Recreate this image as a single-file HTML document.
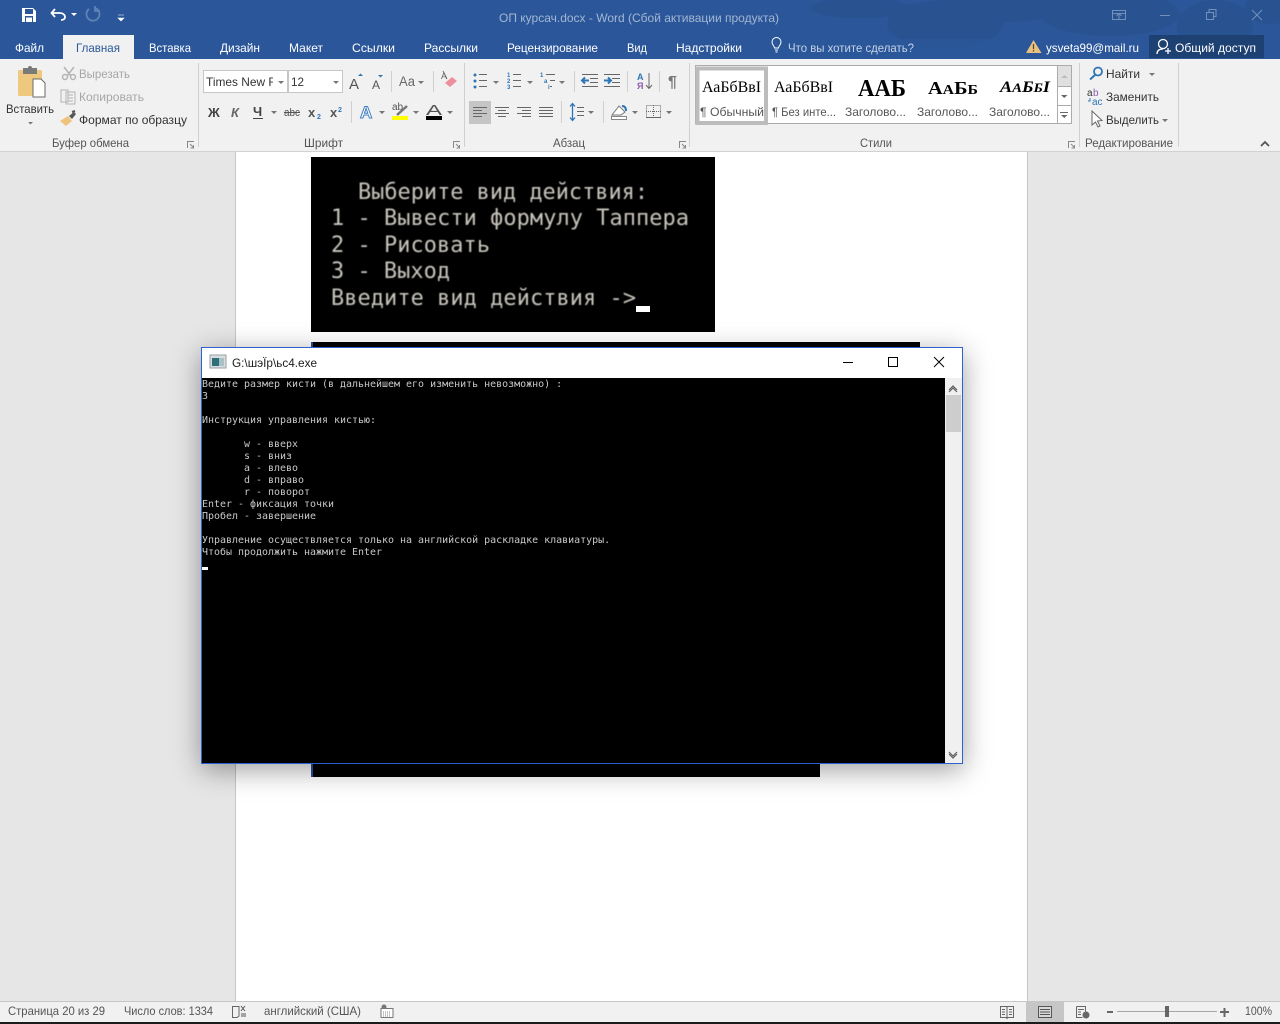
<!DOCTYPE html>
<html lang="ru"><head><meta charset="utf-8"><title>Word</title>
<style>
html,body{margin:0;padding:0;width:1280px;height:1024px;overflow:hidden;background:#e6e6e6}
svg{position:absolute;left:0;top:0;display:block}
text{font-family:"Liberation Sans","DejaVu Sans",sans-serif;font-size:12px;fill:#444;white-space:pre}
.t{fill:#fff}.g{fill:#a6a6a6}.l{fill:#555}
.m{font-family:"DejaVu Sans Mono","Liberation Mono",monospace;font-size:21.9px;fill:#c8c4bc}
.c{font-family:"DejaVu Sans Mono","Liberation Mono",monospace;font-size:9.97px;fill:#c8c8c8}
.s{font-family:"Liberation Serif",serif;fill:#000}
#win{position:absolute;left:201px;top:347px;width:760px;height:415px;border:1px solid #2a62cf;background:#fff;box-shadow:0 6px 26px rgba(0,0,0,.38)}
</style></head><body>
<svg width="1280" height="1024" viewBox="0 0 1280 1024">
<defs><filter id="b" x="-5%" y="-20%" width="110%" height="140%"><feGaussianBlur stdDeviation="0.4"/></filter></defs>
<!-- doc area -->
<rect y="152" width="1280" height="850" fill="#e6e6e6"/>
<rect x="235" y="152" width="1" height="850" fill="#c6c6c6"/><rect x="1027" y="152" width="1" height="850" fill="#c6c6c6"/>
<rect x="236" y="152" width="791" height="850" fill="#fff"/>
<rect x="311" y="157" width="404" height="175" fill="#000"/>
<g filter="url(#b)">
<text class="m" x="358" y="199" textLength="290">Выберите вид действия:</text>
<text class="m" x="331" y="225" textLength="358">1 - Вывести формулу Таппера</text>
<text class="m" x="331" y="252" textLength="159">2 - Рисовать</text>
<text class="m" x="331" y="278" textLength="119">3 - Выход</text>
<text class="m" x="331" y="305" textLength="305">Введите вид действия -&gt;</text>
</g>
<rect x="636" y="306" width="14" height="6" fill="#fff"/>
<rect x="311" y="342" width="609" height="6" fill="#000"/><rect x="311" y="342" width="2" height="6" fill="#2a4fa0"/>
<rect x="312" y="760" width="508" height="17" fill="#000"/><rect x="311" y="760" width="2" height="17" fill="#2a4fa0"/>
</svg>

<div id="win"></div>

<svg width="1280" height="1024" viewBox="0 0 1280 1024">
<!-- Console -->
<rect x="202" y="378" width="743" height="385" fill="#000"/>
<rect x="945" y="378" width="17" height="385" fill="#f0f0f0"/>
<rect x="946" y="395" width="15" height="37" fill="#cdcdcd"/>
<path d="M949 390l4-4 4 4M949 392l4-4 4 4" fill="none" stroke="#606060" stroke-width="1.2"/>
<path d="M949 752l4 4 4-4M949 754l4 4 4-4" fill="none" stroke="#606060" stroke-width="1.2"/>
<rect x="210" y="355" width="16" height="13" fill="#d8dde0" stroke="#9aa0a4"/><rect x="212" y="358" width="7" height="8" fill="#2f6f78"/><rect x="219" y="358" width="5" height="8" fill="#a9c1c6"/>
<text x="232" y="367" textLength="85" lengthAdjust="spacingAndGlyphs" style="fill:#1c1c1c">G:\шэЇр\ьс4.exe</text>
<rect x="843" y="362" width="10" height="1" fill="#000"/>
<rect x="888.5" y="357.5" width="9" height="9" fill="none" stroke="#000"/>
<path d="M934 357l10 10M944 357l-10 10" stroke="#000" stroke-width="1"/>
<text class="c" x="202" y="387">Ведите размер кисти (в дальнейшем его изменить невозможно) :</text>
<text class="c" x="202" y="399">3</text>
<text class="c" x="202" y="423">Инструкция управления кистью:</text>
<text class="c" x="244" y="447">w - вверх</text>
<text class="c" x="244" y="459">s - вниз</text>
<text class="c" x="244" y="471">a - влево</text>
<text class="c" x="244" y="483">d - вправо</text>
<text class="c" x="244" y="495">r - поворот</text>
<text class="c" x="202" y="507">Enter - фиксация точки</text>
<text class="c" x="202" y="519">Пробел - завершение</text>
<text class="c" x="202" y="543">Управление осуществляется только на английской раскладке клавиатуры.</text>
<text class="c" x="202" y="555">Чтобы продолжить нажмите Enter</text>
<rect x="202" y="567" width="6" height="3" fill="#fff"/>

<!-- Title bar -->
<rect width="1280" height="59" fill="#2b579a"/>
<g fill="#285290"><ellipse cx="945" cy="24" rx="58" ry="24"/><ellipse cx="1000" cy="8" rx="70" ry="14"/><ellipse cx="1110" cy="14" rx="70" ry="22"/><ellipse cx="1215" cy="26" rx="38" ry="26"/><ellipse cx="860" cy="8" rx="50" ry="10"/><ellipse cx="1270" cy="8" rx="25" ry="16"/></g>
<rect x="770" y="39" width="258" height="18" fill="#2b579a" opacity=".8"/>
<path d="M22 8h11l3 3v11H22z" fill="#fff"/><rect x="25" y="9" width="8" height="5" fill="#2b579a"/><rect x="25" y="16" width="8" height="6" fill="#2b579a"/><rect x="26" y="17.500" width="6" height="4.500" fill="#fff"/>
<path d="M55 9l-3.500 4 3.500 4M52 13h8c3 0 5 2 5 4s-2 3-4 3" fill="none" stroke="#fff" stroke-width="1.800"/>
<path d="M71 13h6l-3 3z" fill="#fff"/>
<path d="M89 9a6.500 6.500 0 1 0 6-1M95 6v5h5" fill="none" stroke="#5f83b7" stroke-width="1.800"/>
<path d="M118 15h6M118 18h6l-3 3z" fill="#fff" stroke="#fff" stroke-width=".6"/>
<text x="499" y="22" textLength="280" lengthAdjust="spacingAndGlyphs" style="fill:#a3b6d3">ОП курсач.docx - Word (Сбой активации продукта)</text>
<g fill="none" stroke="#7390bb"><rect x="1112.500" y="10.500" width="13" height="9"/><path d="M1112 13.500h14M1119 19v-5M1116.500 16l2.500-2.500 2.500 2.500"/><path d="M1160 15.500h10"/><rect x="1206.500" y="12.500" width="7" height="7"/><path d="M1209 12v-2.500h7v7h-2.500"/><path d="M1252 10l10 10M1262 10l-10 10"/></g>
<!-- Tabs -->
<rect x="63" y="35" width="71" height="24" fill="#f1f1f1"/>
<text class="t" x="15" y="52" textLength="29" lengthAdjust="spacingAndGlyphs">Файл</text>
<text x="76" y="52" textLength="44" lengthAdjust="spacingAndGlyphs" style="fill:#2b579a">Главная</text>
<text class="t" x="149" y="52" textLength="42" lengthAdjust="spacingAndGlyphs">Вставка</text>
<text class="t" x="220" y="52" textLength="40" lengthAdjust="spacingAndGlyphs">Дизайн</text>
<text class="t" x="289" y="52" textLength="34" lengthAdjust="spacingAndGlyphs">Макет</text>
<text class="t" x="352" y="52" textLength="43" lengthAdjust="spacingAndGlyphs">Ссылки</text>
<text class="t" x="424" y="52" textLength="54" lengthAdjust="spacingAndGlyphs">Рассылки</text>
<text class="t" x="507" y="52" textLength="91" lengthAdjust="spacingAndGlyphs">Рецензирование</text>
<text class="t" x="627" y="52" textLength="20" lengthAdjust="spacingAndGlyphs">Вид</text>
<text class="t" x="676" y="52" textLength="66" lengthAdjust="spacingAndGlyphs">Надстройки</text>
<path d="M774.500 48c0-2-2.500-3-2.500-6a4.500 4.500 0 0 1 9 0c0 3-2.500 4-2.500 6zM775 50h3M775.500 52h2" fill="none" stroke="#fff"/>
<text x="788" y="52" textLength="126" lengthAdjust="spacingAndGlyphs" style="fill:#c6d3e6">Что вы хотите сделать?</text>
<path d="M1033.500 40l8 13h-15.500z" fill="#e9c181"/><path d="M1033.500 44v5M1033.500 50v1.500" stroke="#5c4a2a" stroke-width="1.300"/>
<text class="t" x="1046" y="52" textLength="93" lengthAdjust="spacingAndGlyphs">ysveta99@mail.ru</text>
<rect x="1149" y="35" width="115" height="23" fill="#1e4173"/>
<circle cx="1163" cy="44" r="4.500" fill="none" stroke="#fff" stroke-width="1.300"/><path d="M1157 54c0-4 3-5 6-5M1165 51h6M1168 48v6" fill="none" stroke="#fff" stroke-width="1.300"/>
<text class="t" x="1175" y="52" textLength="81" lengthAdjust="spacingAndGlyphs">Общий доступ</text>

<!-- Ribbon -->
<rect y="59" width="1280" height="92" fill="#f1f1f1"/>
<rect y="151" width="1280" height="1" fill="#d2d2d2"/>
<g fill="#d0d0d0"><rect x="198" y="63" width="1" height="84"/><rect x="464" y="63" width="1" height="84"/><rect x="689" y="63" width="1" height="84"/><rect x="1079" y="63" width="1" height="84"/><rect x="1178" y="63" width="1" height="84"/><rect x="391" y="71" width="1" height="21"/><rect x="433" y="71" width="1" height="21"/><rect x="351" y="101" width="1" height="22"/><rect x="574" y="71" width="1" height="21"/><rect x="627" y="71" width="1" height="21"/><rect x="659" y="71" width="1" height="21"/><rect x="561" y="101" width="1" height="22"/><rect x="603" y="101" width="1" height="22"/></g>

<!-- Clipboard -->
<rect x="18" y="70" width="24" height="26" rx="1.500" fill="#efc880"/>
<rect x="23" y="68" width="14" height="6" fill="#7a7a7a"/><circle cx="30" cy="68" r="2" fill="#7a7a7a"/>
<path d="M33 79h8l4 4v14H33z" fill="#fff" stroke="#6a6a6a"/>
<text x="6" y="113" textLength="48" lengthAdjust="spacingAndGlyphs" style="fill:#333">Вставить</text>
<path d="M28 122h5l-2.500 2.500z" fill="#777"/>
<g fill="none" stroke="#b4b4b4" stroke-width="1.500"><path d="M64 67l7 9M74 67l-7 9"/><circle cx="65" cy="77" r="2.500"/><circle cx="73" cy="77" r="2.500"/><path d="M61 90h7v12h-7zM66 92h9v12h-9z" stroke-width="1" fill="#f1f1f1"/><path d="M68 95h5M68 98h5M68 101h5" stroke-width="1"/></g>
<text class="g" x="79" y="78" textLength="51" lengthAdjust="spacingAndGlyphs">Вырезать</text>
<text class="g" x="79" y="101" textLength="65" lengthAdjust="spacingAndGlyphs">Копировать</text>
<path d="M60 121l8-5 4 5-6 5z" fill="#efc27e"/><path d="M69 116l5-4 2 2-4 5z" fill="#555"/><path d="M72 112l3-1" stroke="#555" stroke-width="2"/>
<text x="79" y="124" textLength="108" lengthAdjust="spacingAndGlyphs" style="fill:#333">Формат по образцу</text>
<text class="l" x="52" y="147" textLength="77" lengthAdjust="spacingAndGlyphs">Буфер обмена</text>
<g fill="none" stroke="#888"><path d="M187.500 148v-6.500h6.500M190 144l3.500 3.500M193.500 145v3h-3"/><path d="M453.500 148v-6.500h6.500M456 144l3.500 3.500M459.500 145v3h-3"/><path d="M679.500 148v-6.500h6.500M682 144l3.500 3.500M685.500 145v3h-3"/><path d="M1068.500 148v-6.500h6.500M1071 144l3.500 3.500M1074.500 145v3h-3"/></g>

<!-- Font -->
<rect x="203.500" y="70.500" width="84" height="22" fill="#fff" stroke="#c6c6c6"/>
<rect x="288.500" y="70.500" width="54" height="22" fill="#fff" stroke="#c6c6c6"/>
<text x="206" y="86" textLength="71" lengthAdjust="spacingAndGlyphs" style="fill:#333">Times New R</text>
<rect x="273" y="72" width="6" height="19" fill="#fff"/>
<text x="291" y="86" textLength="13" lengthAdjust="spacingAndGlyphs" style="fill:#333">12</text>
<g fill="#777"><path d="M278 81h6l-3 3zM333 81h6l-3 3zM418 81h6l-3 3zM271 111h6l-3 3zM379 111h6l-3 3zM413 111h6l-3 3zM447 111h6l-3 3zM493 81h6l-3 3zM527 81h6l-3 3zM559 81h6l-3 3zM588 111h6l-3 3zM632 111h6l-3 3zM666 111h6l-3 3z"/></g>
<text x="349" y="89" style="font-size:15px;fill:#555">А</text><path d="M358 76l2.500-2.500 2.500 2.500z" fill="#2f75b5"/>
<text x="372" y="89" style="font-size:12px;fill:#555">А</text><path d="M378 75h5l-2.500 2.500z" fill="#2f75b5"/>
<text x="399" y="86" style="font-size:14px;fill:#666" textLength="16" lengthAdjust="spacingAndGlyphs">Аа</text>
<path d="M443 71l4 8" stroke="#777" stroke-width="1"/><path d="M445 83l7-6 5 4-7 6z" fill="#ee8f9d"/><text x="441" y="79" style="font-size:9px;fill:#666">A</text>
<text x="208" y="117" style="font-size:13px;font-weight:bold;fill:#444">Ж</text>
<text x="231" y="117" style="font-size:13px;font-weight:bold;font-style:italic;fill:#666">К</text>
<text x="253" y="116" style="font-size:13px;font-weight:bold;fill:#444">Ч</text><rect x="253" y="118" width="10" height="1" fill="#444"/>
<text x="284" y="116" style="font-size:11px;fill:#555" textLength="16" lengthAdjust="spacingAndGlyphs">abc</text><rect x="284" y="112" width="16" height="1" fill="#555"/>
<text x="308" y="117" style="font-size:13px;font-weight:bold;fill:#555">x</text><text x="317" y="119" style="font-size:7px;font-weight:bold;fill:#2f75b5">2</text>
<text x="330" y="117" style="font-size:13px;font-weight:bold;fill:#555">x</text><text x="338" y="112" style="font-size:7px;font-weight:bold;fill:#2f75b5">2</text>
<text x="360" y="118" style="font-size:17px;font-weight:bold;fill:#fff;stroke:#3f7fc4;stroke-width:1">A</text>
<text x="392" y="110" style="font-size:10px;fill:#555">ab</text><path d="M397 115l10-9" stroke="#777" stroke-width="2.500"/><rect x="392" y="116" width="16" height="4" fill="#ff0"/>
<text x="426" y="115" style="font-size:15px;fill:#555" textLength="16" lengthAdjust="spacingAndGlyphs">A</text><rect x="426" y="116" width="16" height="4" fill="#000"/>
<text class="l" x="304" y="147" textLength="39" lengthAdjust="spacingAndGlyphs">Шрифт</text>

<!-- Paragraph -->
<g fill="#2f75b5"><circle cx="475" cy="75" r="1.500"/><circle cx="475" cy="81" r="1.500"/><circle cx="475" cy="87" r="1.500"/></g>
<path d="M479 74.500h8M479 80.500h8M479 86.500h8M513 74.500h8M513 80.500h8M513 86.500h8M546 74.500h9M550 80.500h5M550 86.500h2M582 74.500h16M590 78.500h8M590 82.500h8M582 86.500h16M604 74.500h16M612 78.500h8M612 82.500h8M604 86.500h16" stroke="#666" fill="none"/>
<text x="507" y="77" style="font-size:6px;fill:#2f75b5;font-weight:bold">1</text><text x="507" y="83" style="font-size:6px;fill:#2f75b5;font-weight:bold">2</text><text x="507" y="89" style="font-size:6px;fill:#2f75b5;font-weight:bold">3</text><text x="540" y="77" style="font-size:6px;fill:#2f75b5;font-weight:bold">1</text><text x="544" y="83" style="font-size:6px;fill:#2f75b5;font-weight:bold">a</text><text x="548" y="89" style="font-size:6px;fill:#2f75b5;font-weight:bold">i</text>
<path d="M589 80.500h-7M585 77.500l-3 3 3 3M604 80.500h7M608 77.500l3 3-3 3" stroke="#2f75b5" stroke-width="2" fill="none"/>
<text x="637" y="80" style="font-size:9px;font-weight:bold;fill:#2f75b5">A</text><text x="637" y="89" style="font-size:9px;font-weight:bold;fill:#8e5bb0">Я</text>
<path d="M649 73v15M646 85l3 3.500 3-3.500" stroke="#666" fill="none"/>
<text x="668" y="87" style="font-size:16px;font-weight:bold;fill:#777">¶</text>
<rect x="469" y="101" width="22" height="23" fill="#c5c5c5"/>
<path d="M473 107.500h14M473 110.500h9M473 113.500h14M473 116.500h9M495 107.500h14M498 110.500h8M495 113.500h14M498 116.500h8M517 107.500h14M522 110.500h9M517 113.500h14M522 116.500h9M539 107.500h14M539 110.500h14M539 113.500h14M539 116.500h14" stroke="#666" fill="none"/>
<path d="M572.500 104v16M570 106.500l2.500-3 2.500 3M570 117.500l2.500 3 2.500-3" stroke="#2f75b5" fill="none" stroke-width="1.300"/><path d="M577 107.500h7M577 111.500h7M577 115.500h7" stroke="#666"/>
<path d="M612 115l7-9 6 6-4 3z" fill="#fff" stroke="#777"/><path d="M622 106c3 0 4 2 4 5" stroke="#2f75b5" stroke-width="2" fill="none"/><rect x="611.500" y="116.500" width="15" height="3" fill="#fff" stroke="#888"/>
<g fill="none" stroke="#666" stroke-dasharray="1 1"><rect x="646.500" y="105.500" width="14" height="12"/><path d="M653.500 105v13M646 111.500h15"/></g><rect x="646" y="117" width="15" height="1" fill="#666"/>
<text class="l" x="553" y="147" textLength="32" lengthAdjust="spacingAndGlyphs">Абзац</text>

<!-- Styles -->
<rect x="695.500" y="65.500" width="376" height="58" fill="#fff" stroke="#ababab"/>
<rect x="697.500" y="68.500" width="68.500" height="54.500" fill="#fff" stroke="#bcbcbc" stroke-width="4"/>
<text class="s" x="702" y="92" style="font-size:16px" textLength="59" lengthAdjust="spacingAndGlyphs">АаБбВвI</text>
<text class="s" x="774" y="92" style="font-size:16px" textLength="59" lengthAdjust="spacingAndGlyphs">АаБбВвI</text>
<text class="s" x="858" y="96" style="font-size:24px;font-weight:bold" textLength="48" lengthAdjust="spacingAndGlyphs">ААБ</text>
<text class="s" x="928" y="94" style="font-size:18px;font-weight:bold" textLength="50" lengthAdjust="spacingAndGlyphs">А<tspan style="font-size:14px">А</tspan>Б<tspan style="font-size:14px">Б</tspan></text>
<text class="s" x="1000" y="92" style="font-size:16px;font-weight:bold;font-style:italic" textLength="50" lengthAdjust="spacingAndGlyphs">А<tspan style="font-size:13px">А</tspan>Б<tspan style="font-size:13px">Б</tspan>I</text>
<text class="l" x="700" y="116" textLength="64" lengthAdjust="spacingAndGlyphs">¶ Обычный</text>
<text class="l" x="772" y="116" textLength="64" lengthAdjust="spacingAndGlyphs">¶ Без инте...</text>
<text class="l" x="845" y="116" textLength="61" lengthAdjust="spacingAndGlyphs">Заголово...</text>
<text class="l" x="917" y="116" textLength="61" lengthAdjust="spacingAndGlyphs">Заголово...</text>
<text class="l" x="989" y="116" textLength="61" lengthAdjust="spacingAndGlyphs">Заголово...</text>
<rect x="1057.500" y="65.500" width="14" height="58" fill="#fff" stroke="#ababab"/>
<rect x="1058" y="66" width="13" height="20" fill="#e0e0e0"/>
<path d="M1057 86.500h15M1057 105.500h15" stroke="#ababab"/>
<path d="M1061 78l3.500-3 3.500 3z" fill="#bdbdbd"/><path d="M1061 95h6.500l-3.250 3z" fill="#666"/><path d="M1060 112.500h8" stroke="#666"/><path d="M1061 115h6.500l-3.250 3z" fill="#666"/>
<text class="l" x="860" y="147" textLength="32" lengthAdjust="spacingAndGlyphs">Стили</text>

<!-- Editing -->
<circle cx="1098" cy="71.500" r="4" fill="none" stroke="#2f75b5" stroke-width="1.800"/><path d="M1095 75l-5 4.500" stroke="#2f75b5" stroke-width="2"/>
<text x="1106" y="78" textLength="34" lengthAdjust="spacingAndGlyphs" style="fill:#333">Найти</text>
<path d="M1149 73h6l-3 3zM1162 119h6l-3 3z" fill="#777"/>
<text x="1087" y="96" style="font-size:10px;fill:#333">a</text><text x="1093" y="96" style="font-size:10px;fill:#8e5bb0">b</text><text x="1092" y="105" style="font-size:10px;fill:#2f75b5">ac</text><path d="M1090 98v3h-2" stroke="#2f75b5" fill="none"/>
<text x="1106" y="101" textLength="53" lengthAdjust="spacingAndGlyphs" style="fill:#333">Заменить</text>
<path d="M1092 111v14l3.500-3 2.500 5 2-1-2.500-5 4.500-.5z" fill="#fff" stroke="#666"/>
<text x="1106" y="124" textLength="53" lengthAdjust="spacingAndGlyphs" style="fill:#333">Выделить</text>
<text class="l" x="1085" y="147" textLength="88" lengthAdjust="spacingAndGlyphs">Редактирование</text>
<path d="M1261 146l4-4 4 4" fill="none" stroke="#555" stroke-width="1.800"/>

<!-- Status bar -->
<rect y="1002" width="1280" height="20" fill="#f1f1f1"/><rect y="1001" width="1280" height="1" fill="#c6c6c6"/>
<rect y="1022" width="1280" height="2" fill="#1c1c1c"/>
<text class="l" x="8" y="1015" textLength="97" lengthAdjust="spacingAndGlyphs">Страница 20 из 29</text>
<text class="l" x="124" y="1015" textLength="89" lengthAdjust="spacingAndGlyphs">Число слов: 1334</text>
<path d="M237 1006.500h-4.500v11h4.500l2-1.500V1006.500z" fill="none" stroke="#666"/><path d="M241 1006l4 5M245 1006l-4 5M241 1014h5M241 1016h5" stroke="#555" fill="none"/>
<text class="l" x="264" y="1015" textLength="97" lengthAdjust="spacingAndGlyphs">английский (США)</text>
<circle cx="384" cy="1007" r="2.500" fill="#777"/><rect x="381" y="1008.500" width="12" height="9" fill="#fff" stroke="#777"/><path d="M383 1012h8M383 1014h8M383 1016h8" stroke="#888" stroke-dasharray="1 1"/>
<path d="M1000.500 1006.500h6l.5 1 .5-1h6v11h-6l-.5 1-.5-1h-6zM1007 1007v11M1002 1009.500h3M1002 1012h3M1002 1014.500h3M1009 1009.500h3M1009 1012h3M1009 1014.500h3" fill="none" stroke="#666"/>
<rect x="1026" y="1002" width="38" height="20" fill="#c6c6c6"/>
<rect x="1038.500" y="1006.500" width="13" height="11" fill="#d8d8d8" stroke="#555"/><path d="M1040 1009.500h10M1040 1012h10M1040 1014.500h10" stroke="#555"/>
<path d="M1076.500 1006.500h9v5M1076.500 1006.500v11h6M1078 1009.500h6M1078 1012h3M1078 1014.500h3" fill="none" stroke="#666"/><circle cx="1086" cy="1015" r="3.500" fill="#666"/>
<rect x="1107" y="1011" width="6" height="2" fill="#666"/>
<rect x="1117" y="1011" width="100" height="1" fill="#a6a6a6"/>
<rect x="1165" y="1006" width="4" height="11" fill="#666"/>
<path d="M1220 1012h9M1224.500 1008v9" stroke="#666" stroke-width="2"/>
<text class="l" x="1245" y="1015" textLength="27" lengthAdjust="spacingAndGlyphs">100%</text>
</svg>
</body></html>
